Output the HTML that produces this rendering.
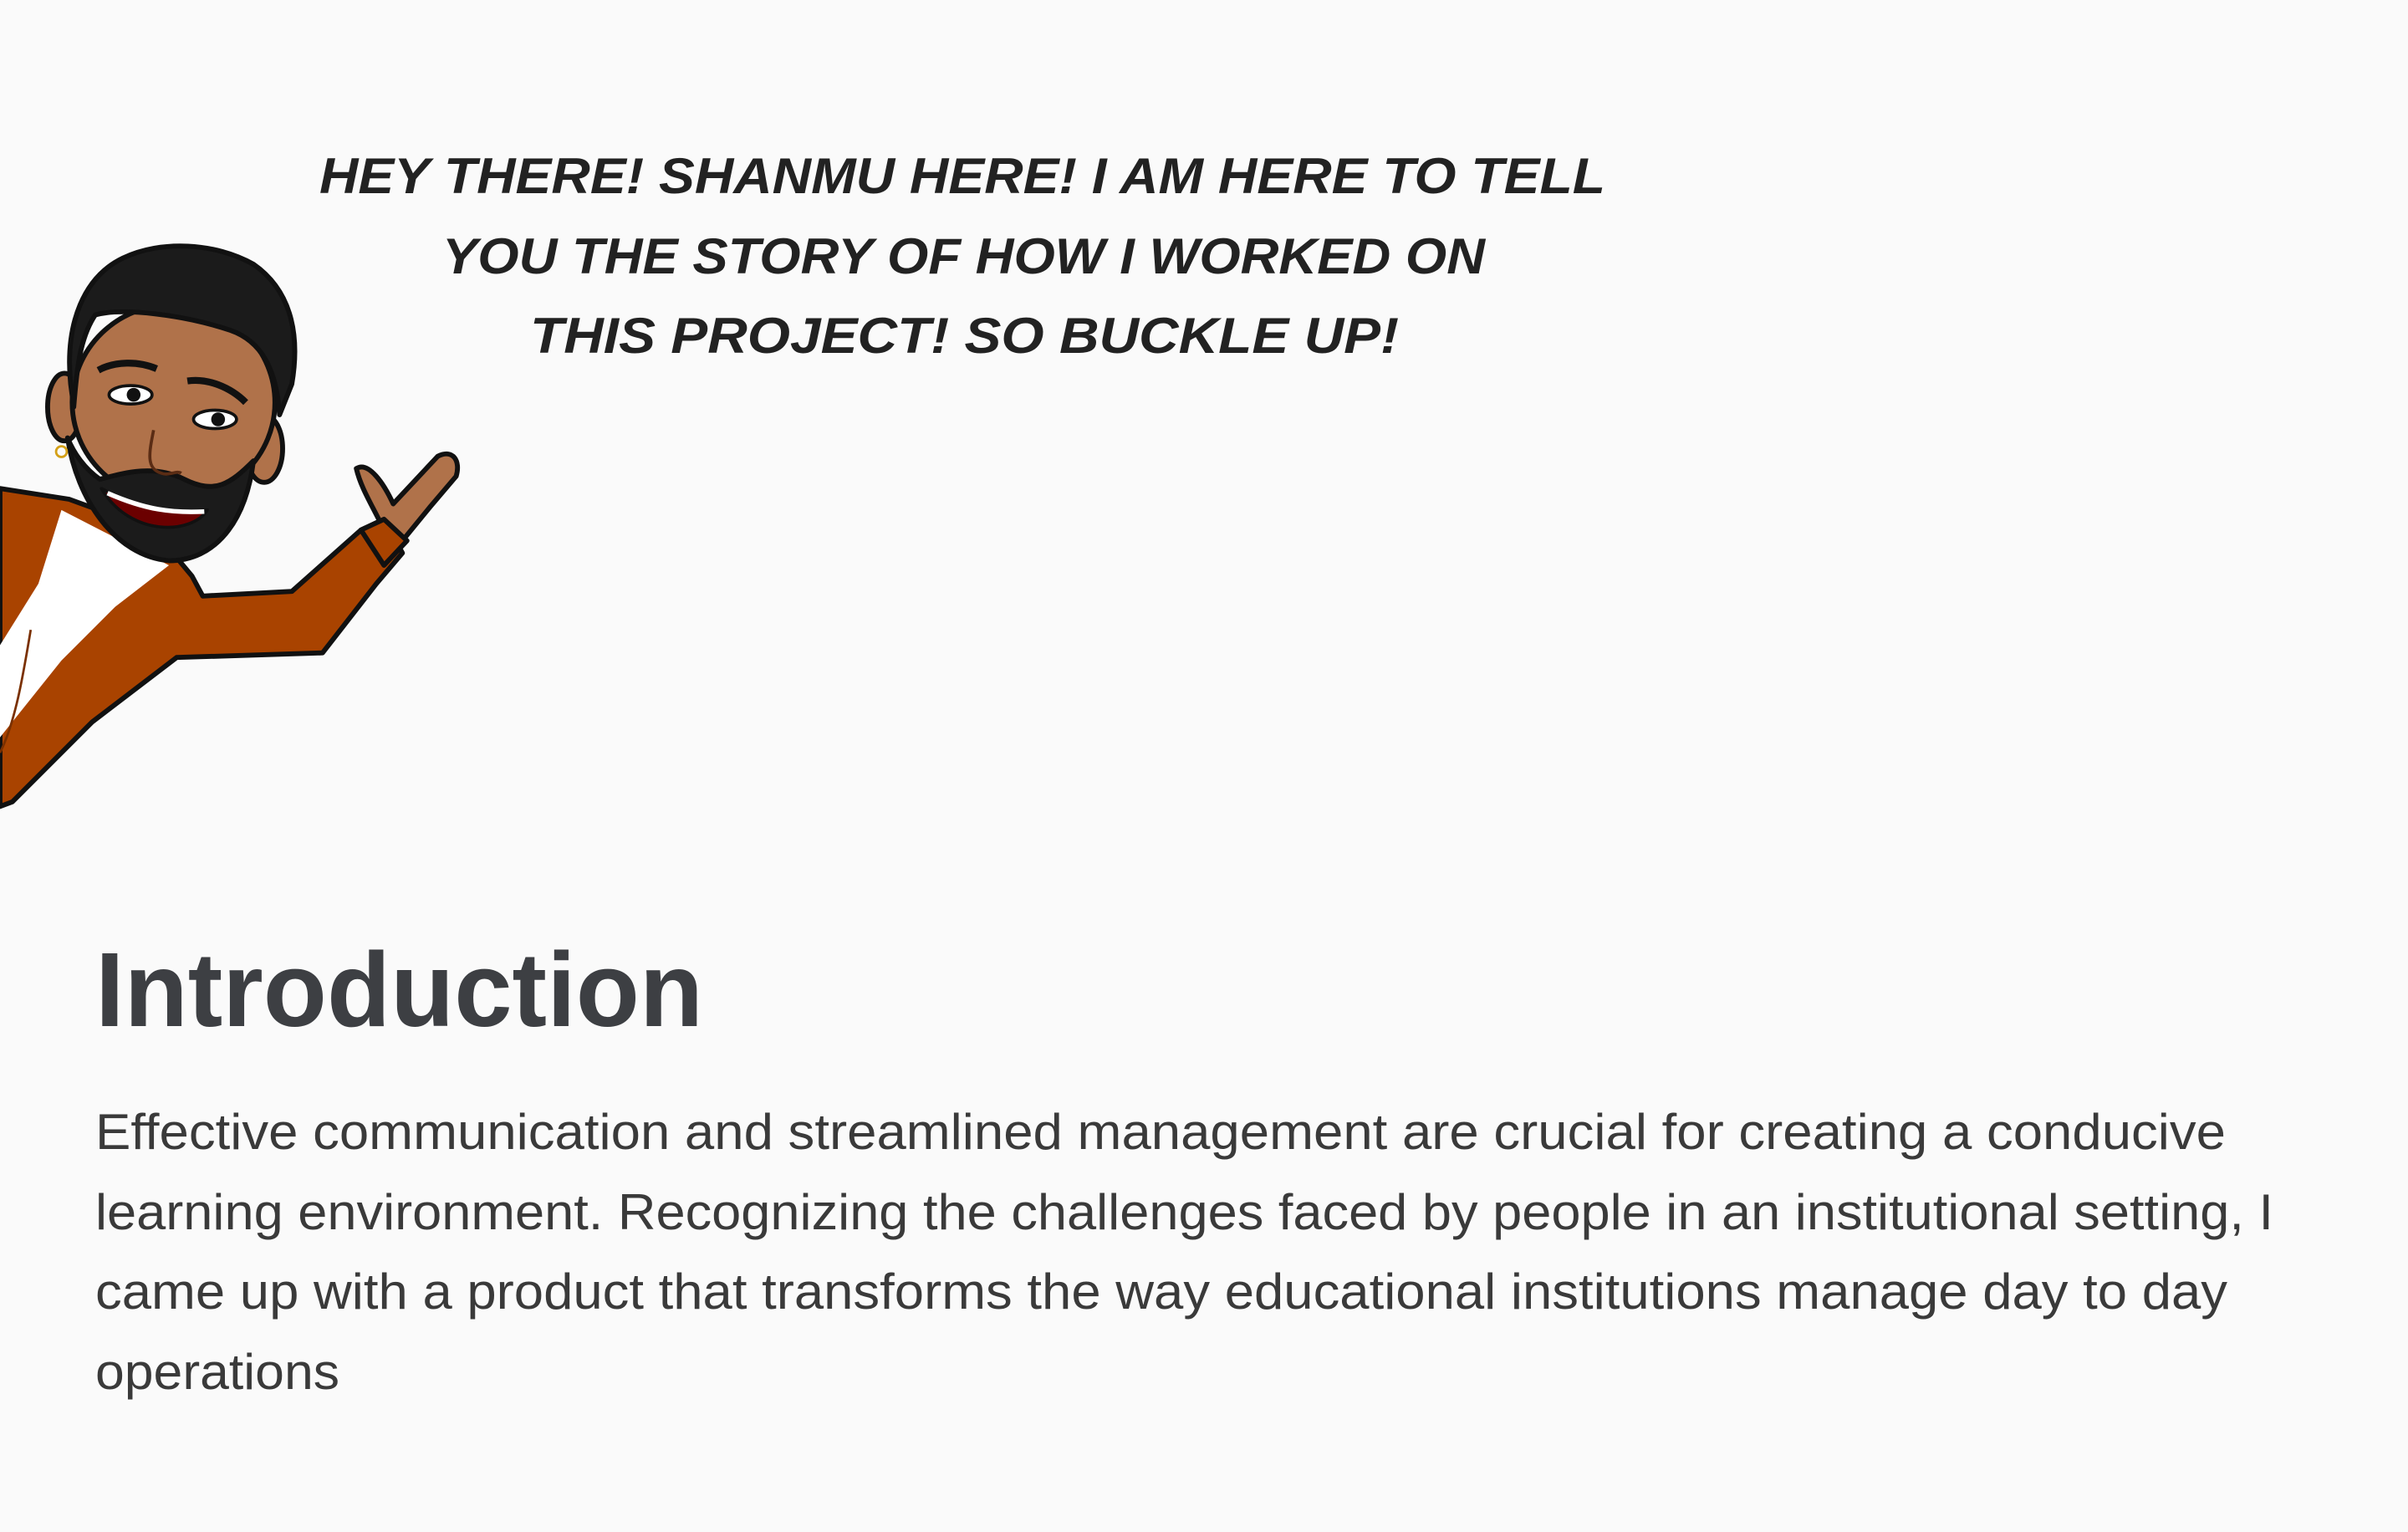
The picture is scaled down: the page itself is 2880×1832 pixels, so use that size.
<!DOCTYPE html>
<html><head><meta charset="utf-8"><style>
html,body{margin:0;padding:0;background:#fafafa;}
svg{display:block;}
</style></head><body>
<svg width="2880" height="1832" viewBox="0 0 2880 1832" xmlns="http://www.w3.org/2000/svg">
<rect width="2880" height="1832" fill="#fafafa"/>
<g transform="scale(1.837)" stroke="#111" stroke-width="3.2" stroke-linejoin="round">
  <!-- jacket -->
  <path d="M0,318 L45,325 L100,345 L125,375 L132,388 L190,385 L235,345 L250,338 L262,360 L245,380 L210,425 L115,428 L60,470 L8,522 L0,525 Z" fill="#a94300"/>
  <!-- shirt -->
  <path d="M40,332 L110,368 L75,395 L40,430 L0,480 L0,420 L25,380 Z" fill="#ffffff" stroke="none"/>
  <path d="M20,410 C15,440 10,470 0,490" fill="none" stroke="#7a3000" stroke-width="1.5"/>
  <!-- hand -->
  <path d="M232,305 C240,300 250,315 256,328 L285,297 C295,292 300,300 297,310 L280,330 L262,352 L250,345 C243,330 235,318 232,305 Z" fill="#b0724a"/>
  <!-- cuff -->
  <path d="M235,345 L250,338 L265,352 L250,368 Z" fill="#a94300"/>
  <!-- ears -->
  <ellipse cx="42" cy="265" rx="11" ry="22" fill="#b0724a"/>
  <ellipse cx="172" cy="292" rx="12" ry="22" fill="#b0724a"/>
  <!-- face -->
  <ellipse cx="113" cy="262" rx="66" ry="64" fill="#b0724a"/>
  <!-- beard -->
  <path d="M44,285 C50,325 75,362 110,365 C140,365 160,340 165,300 C150,315 140,322 120,312 C100,302 80,308 65,312 C55,305 48,295 44,285 Z" fill="#1b1b1b"/>
  <!-- mouth -->
  <path d="M66,318 C90,330 110,335 135,332 C125,348 85,350 66,318 Z" fill="#6b0000" stroke-width="2"/>
  <path d="M70,321 C95,332 112,334 133,333" fill="none" stroke="#fff" stroke-width="3"/>
  <!-- hair -->
  <path d="M46,250 C42,210 55,180 80,168 C105,156 140,158 165,172 C188,188 196,215 190,250 L182,270 C180,240 170,222 150,215 C120,205 80,200 62,205 C52,220 50,240 48,265 Z" fill="#1b1b1b"/>
  <!-- eyes -->
  <ellipse cx="85" cy="257" rx="14" ry="6" fill="#fff" stroke-width="2"/>
  <ellipse cx="140" cy="273" rx="14" ry="6" fill="#fff" stroke-width="2"/>
  <circle cx="87" cy="257" r="4.5" fill="#111" stroke="none"/>
  <circle cx="142" cy="273" r="4.5" fill="#111" stroke="none"/>
  <path d="M64,241 C75,235 90,235 102,240" fill="none" stroke-width="4.5"/>
  <path d="M122,248 C135,246 150,252 160,262" fill="none" stroke-width="4.5"/>
  <path d="M100,280 C97,295 95,305 105,308 C110,310 115,306 118,308" fill="none" stroke="#5a2c14" stroke-width="2"/>
  <circle cx="40" cy="294" r="3.5" fill="none" stroke="#d4a017" stroke-width="1.5"/>
</g>
<!-- comic text -->
<g font-family="'Liberation Sans', sans-serif" font-weight="bold" font-style="italic" font-size="60" fill="#222">
  <text x="382" y="231" textLength="1538" lengthAdjust="spacingAndGlyphs">HEY THERE! SHANMU HERE! I AM HERE TO TELL</text>
  <text x="529" y="327" textLength="1247" lengthAdjust="spacingAndGlyphs">YOU THE STORY OF HOW I WORKED ON</text>
  <text x="634" y="422" textLength="1039" lengthAdjust="spacingAndGlyphs">THIS PROJECT! SO BUCKLE UP!</text>
</g>
<text x="114" y="1227" font-family="'Liberation Sans', sans-serif" font-weight="bold" font-size="126" fill="#3d3f43" textLength="727" lengthAdjust="spacingAndGlyphs">Introduction</text>
<g font-family="'Liberation Sans', sans-serif" font-size="60" fill="#3a3a3a">
  <text x="114" y="1374" textLength="2548" lengthAdjust="spacingAndGlyphs">Effective communication and streamlined management are crucial for creating a conducive</text>
  <text x="114" y="1470" textLength="2605" lengthAdjust="spacingAndGlyphs">learning environment. Recognizing the challenges faced by people in an institutional setting, I</text>
  <text x="114" y="1565" textLength="2550" lengthAdjust="spacingAndGlyphs">came up with a product that transforms the way educational institutions manage day to day</text>
  <text x="114" y="1661" textLength="292" lengthAdjust="spacingAndGlyphs">operations</text>
</g>
</svg>
</body></html>
